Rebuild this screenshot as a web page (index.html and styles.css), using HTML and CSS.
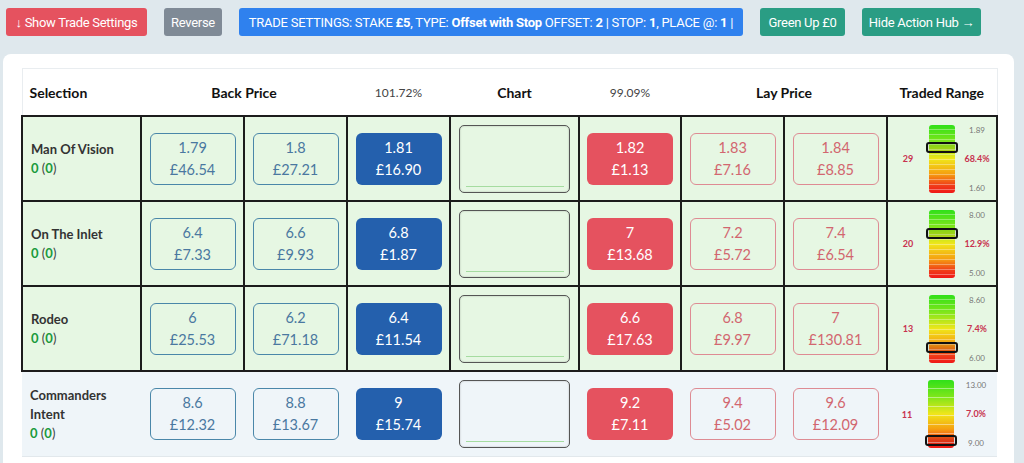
FILE: index.html
```html
<!DOCTYPE html>
<html>
<head>
<meta charset="utf-8">
<link rel="stylesheet" href="styles.css">
</head>
<body>
<div class="topbar">
  <button class="btn btn-red">↓ Show Trade Settings</button>
  <button class="btn btn-grey">Reverse</button>
  <button class="btn btn-blue">TRADE SETTINGS: STAKE <b>£5</b>, TYPE: <b>Offset with Stop</b> OFFSET: <b>2</b> | STOP: <b>1</b>, PLACE @: <b>1</b> |</button>
  <button class="btn btn-teal btn-green">Green Up £0</button>
  <button class="btn btn-teal btn-hide">Hide Action Hub →</button>
</div>
<div class="card">
  <table class="grid">
    <colgroup>
      <col style="width:119px"><col style="width:103px"><col style="width:103px"><col style="width:103px"><col style="width:129px"><col style="width:102px"><col style="width:103px"><col style="width:103px"><col style="width:110px">
    </colgroup>
    <thead>
      <tr>
        <th class="h-sel">Selection</th>
        <th colspan="2">Back Price</th>
        <th class="pct">101.72%</th>
        <th>Chart</th>
        <th class="pct">99.09%</th>
        <th colspan="2">Lay Price</th>
        <th>Traded Range</th>
      </tr>
    </thead>
    <tbody>
      <tr class="active">
        <td class="sel"><div class="name">Man Of Vision</div><div class="pl"><span class="g">0</span> (<span class="g">0</span>)</div></td>
        <td><div class="box back"><span>1.79</span><span>£46.54</span></div></td>
        <td><div class="box back"><span>1.8</span><span>£27.21</span></div></td>
        <td><div class="box back-hi"><span>1.81</span><span>£16.90</span></div></td>
        <td><div class="chart"><div class="cline"></div></div></td>
        <td><div class="box lay-hi"><span>1.82</span><span>£1.13</span></div></td>
        <td><div class="box lay"><span>1.83</span><span>£7.16</span></div></td>
        <td><div class="box lay"><span>1.84</span><span>£8.85</span></div></td>
        <td><div class="range"><div class="rn">29</div><div class="bar"><div class="mark" style="top:17px"></div></div><div class="rlab"><span>1.89</span><b>68.4%</b><span>1.60</span></div></div></td>
      </tr>
      <tr class="active">
        <td class="sel"><div class="name">On The Inlet</div><div class="pl"><span class="g">0</span> (<span class="g">0</span>)</div></td>
        <td><div class="box back"><span>6.4</span><span>£7.33</span></div></td>
        <td><div class="box back"><span>6.6</span><span>£9.93</span></div></td>
        <td><div class="box back-hi"><span>6.8</span><span>£1.87</span></div></td>
        <td><div class="chart"><div class="cline"></div></div></td>
        <td><div class="box lay-hi"><span>7</span><span>£13.68</span></div></td>
        <td><div class="box lay"><span>7.2</span><span>£5.72</span></div></td>
        <td><div class="box lay"><span>7.4</span><span>£6.54</span></div></td>
        <td><div class="range"><div class="rn">20</div><div class="bar"><div class="mark" style="top:18px"></div></div><div class="rlab"><span>8.00</span><b>12.9%</b><span>5.00</span></div></div></td>
      </tr>
      <tr class="active">
        <td class="sel"><div class="name">Rodeo</div><div class="pl"><span class="g">0</span> (<span class="g">0</span>)</div></td>
        <td><div class="box back"><span>6</span><span>£25.53</span></div></td>
        <td><div class="box back"><span>6.2</span><span>£71.18</span></div></td>
        <td><div class="box back-hi"><span>6.4</span><span>£11.54</span></div></td>
        <td><div class="chart"><div class="cline"></div></div></td>
        <td><div class="box lay-hi"><span>6.6</span><span>£17.63</span></div></td>
        <td><div class="box lay"><span>6.8</span><span>£9.97</span></div></td>
        <td><div class="box lay"><span>7</span><span>£130.81</span></div></td>
        <td><div class="range"><div class="rn">13</div><div class="bar"><div class="mark" style="top:47px"></div></div><div class="rlab"><span>8.60</span><b>7.4%</b><span>6.00</span></div></div></td>
      </tr>
      <tr class="idle">
        <td class="sel"><div class="name">Commanders Intent</div><div class="pl"><span class="g">0</span> (<span class="g">0</span>)</div></td>
        <td><div class="box back"><span>8.6</span><span>£12.32</span></div></td>
        <td><div class="box back"><span>8.8</span><span>£13.67</span></div></td>
        <td><div class="box back-hi"><span>9</span><span>£15.74</span></div></td>
        <td><div class="chart"><div class="cline"></div></div></td>
        <td><div class="box lay-hi"><span>9.2</span><span>£7.11</span></div></td>
        <td><div class="box lay"><span>9.4</span><span>£5.02</span></div></td>
        <td><div class="box lay"><span>9.6</span><span>£12.09</span></div></td>
        <td><div class="range"><div class="rn">11</div><div class="bar sparse"><div class="mark" style="top:55px"></div></div><div class="rlab"><span>13.00</span><b>7.0%</b><span>9.00</span></div></div></td>
      </tr>
    </tbody>
  </table>
</div>
</body>
</html>
```
FILE: styles.css
```css
html, body {
  margin: 0;
  padding: 0;
  background: #dfe8ed;
  font-family: "Lato", "Noto Sans", sans-serif;
  height: 463px;
  overflow: hidden;
}

.topbar {
  display: flex;
  gap: 17px;
  padding: 8px 6px 0 6px;
  height: 28px;
}

.btn {
  border: none;
  border-radius: 3px;
  color: #fff;
  font-family: "Roboto", "Liberation Sans", sans-serif;
  font-size: 13px;
  letter-spacing: -0.3px;
  height: 28px;
  padding: 0 6px;
  white-space: nowrap;
  flex: none;
}
.btn b { font-weight: 700; }
.btn-red { background: #e5525f; width: 141px; }
.btn-grey { background: #7f8a96; width: 58px; }
.btn-blue { background: #2f81ee; width: 504px; letter-spacing: -0.25px; }
.btn-teal { background: #2a9d84; }
.btn-green { width: 85px; }
.btn-hide { width: 119px; }

.card {
  margin: 18px 10px 0 3px;
  background: #fff;
  border-radius: 8px 8px 0 0;
  padding: 14px 18px 0 18px;
  height: 400px;
}

.grid {
  border-collapse: collapse;
  table-layout: fixed;
  width: 975px;
}

thead th {
  height: 46px;
  border-top: 1px solid #e9edf0;
  font-size: 14px;
  font-weight: 700;
  color: #111;
  text-align: center;
  padding: 0;
}
thead th.h-sel {
  text-align: left;
  padding-left: 7px;
  border-left: 1px solid #e9edf0;
}
thead th.pct {
  font-weight: 400;
  font-size: 12px;
  color: #444;
}
thead th:last-child { border-right: 1px solid #e9edf0; }

tbody td {
  padding: 0;
  height: 83px;
  vertical-align: middle;
}
tr.active td {
  background: #e6f7e3;
  border: 2px solid #1c1c1c;
}
tr.idle td {
  background: #eff5f9;
  border-bottom: 1px solid #e2e8ec;
  height: 84px;
}

.sel { padding-left: 8px !important; }
.name {
  font-size: 13px;
  font-weight: 700;
  color: #333;
  line-height: 19px;
  padding-right: 8px;
}
.pl {
  font-size: 13px;
  color: #444;
  line-height: 19px;
}
.g { color: #1a9a3c; font-weight: 700; }

.box {
  width: 86px;
  height: 52px;
  margin: 0 auto;
  box-sizing: border-box;
  border-radius: 6px;
  display: flex;
  flex-direction: column;
  align-items: center;
  justify-content: center;
  font-size: 14.5px;
  line-height: 22px;
  font-weight: 400;
}
.back { border: 1px solid #4a87a9; color: #4a78a0; }
.lay { border: 1px solid #de8b93; color: #d2666f; }
.back-hi { background: #2460ad; color: #fff; }
.lay-hi { background: #e5525f; color: #fff; }

.chart {
  width: 111px;
  height: 68px;
  margin: 0 auto;
  box-sizing: border-box;
  border: 1.5px solid #555;
  border-radius: 5px;
  box-shadow: inset 0 0 2px rgba(0,0,0,0.25);
  display: flex;
  align-items: flex-end;
  justify-content: center;
  padding-bottom: 5px;
}
.cline {
  width: 98px;
  height: 1px;
  background: #a5dca0;
}

.range {
  display: flex;
  align-items: center;
  height: 68px;
}
.rn {
  width: 40px;
  text-align: center;
  font-size: 9px;
  font-weight: 700;
  color: #c8324f;
}
.bar {
  position: relative;
  width: 26px;
  height: 68px;
  margin-left: 1px;
  border-radius: 3px;
  background:
    repeating-linear-gradient(to bottom, transparent 0, transparent 4px, rgba(255,255,255,0.35) 4px, rgba(255,255,255,0.35) 5px),
    linear-gradient(to bottom, #30e01a 0%, #7fe61a 25%, #f0e61a 50%, #f5a010 72%, #f04018 88%, #f01818 100%);
}
.bar.sparse {
  background:
    repeating-linear-gradient(to bottom, transparent 0, transparent 8px, rgba(255,255,255,0.45) 8px, rgba(255,255,255,0.45) 9px),
    linear-gradient(to bottom, #30e01a 0%, #7fe61a 25%, #f0e61a 50%, #f5a010 72%, #f04018 88%, #f01818 100%);
}
.mark {
  position: absolute;
  left: -3px;
  width: 32px;
  height: 11px;
  box-sizing: border-box;
  border: 2px solid #111;
  border-radius: 3px;
  background: rgba(0,0,0,0.08);
}
.rlab {
  width: 32px;
  margin-left: 6px;
  height: 68px;
  display: flex;
  flex-direction: column;
  justify-content: space-between;
  align-items: center;
  font-size: 8px;
  line-height: 10px;
  color: #777;
}
.rlab b {
  font-size: 9px;
  color: #c8324f;
  font-weight: 700;
}
```
